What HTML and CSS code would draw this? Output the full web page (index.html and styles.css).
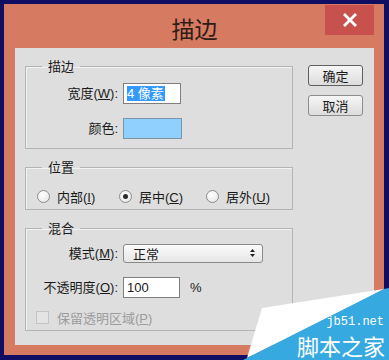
FILE: index.html
```html
<!DOCTYPE html>
<html lang="zh-CN">
<head>
  <meta charset="UTF-8" />
  <title>描边</title>
  <link rel="stylesheet" href="styles.css">
</head>
<body>
  <div class="window">
    <div class="titlebar">
      <span></span>
      <h1 class="titlebar__title">描边</h1>
      <button class="titlebar__close" type="button">
        <svg width="14" height="14" viewBox="0 0 14 14"><path d="M2 2 L12 12 M12 2 L2 12" stroke="#fff" stroke-width="2.8" stroke-linecap="square"/></svg>
      </button>
    </div>

    <div class="content">
      <div class="groups">
        <fieldset class="group group--stroke">
          <legend class="group__legend">描边</legend>
          <div class="row">
            <label class="row__label">宽度(<u>W</u>):</label>
            <span class="field field--width"><span class="field__sel">4 像素</span></span>
          </div>
          <div class="row row--color">
            <label class="row__label">颜色:</label>
            <span class="swatch"></span>
          </div>
        </fieldset>

        <fieldset class="group group--pos">
          <legend class="group__legend">位置</legend>
          <div class="radios">
            <label class="radio radio--inside"><span class="radio__dot"></span><span>内部(<u>I</u>)</span></label>
            <label class="radio radio--center"><span class="radio__dot radio__dot--on"></span><span>居中(<u>C</u>)</span></label>
            <label class="radio"><span class="radio__dot"></span><span>居外(<u>U</u>)</span></label>
          </div>
        </fieldset>

        <fieldset class="group group--blend">
          <legend class="group__legend">混合</legend>
          <div class="row">
            <label class="row__label">模式(<u>M</u>):</label>
            <span class="select"><span>正常</span>
              <svg class="select__arrows" width="7" height="10" viewBox="0 0 7 10"><path d="M3.5 1 L6 4 L1 4 Z M3.5 9 L6 6 L1 6 Z" fill="#222"/></svg>
            </span>
          </div>
          <div class="row row--opacity">
            <label class="row__label">不透明度(<u>O</u>):</label>
            <span class="field field--opacity">100</span>
            <span class="row__unit">%</span>
          </div>
          <div class="check">
            <span class="check__box"></span><span>保留透明区域(<u>P</u>)</span>
          </div>
        </fieldset>
      </div>

      <div class="buttons">
        <button class="btn btn--default" type="button">确定</button>
        <button class="btn" type="button">取消</button>
      </div>
    </div>
  </div>

  <svg class="watermark" width="150" height="75" viewBox="239 285 150 75">
    <polygon points="262,308 384,289 247,358" fill="#ffffff"/>
    <polygon points="384,289 389,288 389,360 243,360 247,358" fill="#36a9e1"/>
    <text x="384" y="325" text-anchor="end" class="watermark__url">jb51.net</text>
    <text x="385" y="355" text-anchor="end" class="watermark__name">脚本之家</text>
  </svg>
</body>
</html>
```

FILE: styles.css
```css
body {
  margin: 0;
  width: 389px;
  height: 360px;
  overflow: hidden;
  position: relative;
  background-color: #100e62;
  font-family: 'Liberation Sans', 'Noto Sans CJK SC', sans-serif;
  font-size: 13px;
  color: #1a1a1a;
}

.window {
  margin: 4px 5px 0 4px;
  height: 351px;
  box-sizing: border-box;
  padding: 0 10px 10px 11px;
  background-color: #d77a62;
}

.titlebar {
  height: 44px;
  display: grid;
  grid-template-columns: 1fr auto 1fr;
}

.titlebar__title {
  margin: 0;
  align-self: center;
  padding-top: 4px;
  font-family: 'Noto Sans CJK SC', sans-serif;
  font-weight: 400;
  font-size: 23px;
  line-height: 30px;
  color: #2e1c16;
}

.titlebar__close {
  justify-self: end;
  width: 49px;
  height: 30px;
  margin-top: 1px;
  padding: 0;
  border: none;
  background-color: #c8504d;
  display: flex;
  align-items: center;
  justify-content: center;
}

.content {
  height: 297px;
  box-sizing: border-box;
  padding: 10px 11px 0 10px;
  background-color: #dedede;
  display: flex;
  gap: 15px;
}

.groups {
  width: 268px;
  display: flex;
  flex-direction: column;
  gap: 10px;
}

.group {
  margin: 0;
  padding: 0;
  min-inline-size: 0;
  border: 1px solid #b4b4b4;
  box-shadow: inset 1px 1px 0 #f2f2f2;
}

.group__legend {
  margin-left: 16px;
  padding: 0 6px;
  line-height: 16px;
  font-family: 'Noto Sans CJK SC', sans-serif;
}

.group--stroke {
  padding: 9px 0 9px 0;
}

.group--pos {
  padding: 13px 0 5px 0;
}

.group--blend {
  padding: 7px 0 6px 0;
}

.row {
  display: flex;
  align-items: center;
  gap: 5px;
  height: 21px;
}

.row--color {
  margin-top: 14px;
}

.row--opacity {
  margin-top: 13px;
}

.row__label {
  width: 92px;
  text-align: right;
  line-height: 16px;
}

.row__unit {
  margin-left: 5px;
}

.field {
  box-sizing: border-box;
  height: 21px;
  border: 1px solid #7f7f7f;
  background-color: #fff;
  display: flex;
  align-items: center;
  padding-left: 3px;
}

.field--width {
  width: 58px;
}

.field--opacity {
  width: 57px;
}

.field__sel {
  background-color: #3399ff;
  color: #fff;
  line-height: 15px;
  padding-right: 1px;
}

.swatch {
  box-sizing: border-box;
  width: 59px;
  height: 21px;
  border: 1px solid #7d95a8;
  background-color: #8fd0ff;
}

.select {
  box-sizing: border-box;
  width: 140px;
  height: 19px;
  margin-top: -1px;
  padding: 0 6px 0 9px;
  border: 1px solid #8a8a8a;
  border-radius: 3px;
  background: linear-gradient(#fbfbfb, #e6e6e6);
  display: flex;
  align-items: center;
  justify-content: space-between;
}

.radios {
  display: flex;
  align-items: center;
  height: 16px;
  padding-left: 11px;
}

.radio {
  display: flex;
  align-items: center;
  gap: 7px;
}

.radio--inside {
  width: 82px;
}

.radio--center {
  width: 87px;
}

.radio__dot {
  box-sizing: border-box;
  width: 13px;
  height: 13px;
  border-radius: 50%;
  border: 1px solid #8c8c8c;
  background: radial-gradient(circle at 40% 35%, #ffffff, #e2e2e2);
  display: flex;
  align-items: center;
  justify-content: center;
}

.radio__dot--on::after {
  content: '';
  width: 5px;
  height: 5px;
  border-radius: 50%;
  background-color: #2a2a2a;
}

.check {
  margin-top: 13px;
  padding-left: 10px;
  height: 13px;
  display: flex;
  align-items: center;
  gap: 8px;
  color: #9c9c9c;
}

.check__box {
  box-sizing: border-box;
  width: 13px;
  height: 13px;
  border: 1px solid #c4c4c4;
  background-color: #e4e4e4;
}

.buttons {
  display: flex;
  flex-direction: column;
  gap: 9px;
  padding-top: 7px;
}

.btn {
  box-sizing: border-box;
  width: 55px;
  height: 21px;
  padding: 0;
  border: 1px solid #8c8c8c;
  border-radius: 3px;
  background: linear-gradient(#f6f6f6, #dcdcdc);
  font-family: 'Noto Sans CJK SC', sans-serif;
  font-size: 13px;
  color: #1a1a1a;
}

.btn--default {
  border-color: #5f5f5f;
}

.watermark {
  position: absolute;
  right: 0;
  bottom: 0;
}

.watermark__url {
  font-family: 'Liberation Mono', monospace;
  font-size: 12px;
  fill: #fff;
}

.watermark__name {
  font-family: 'Noto Sans CJK SC', sans-serif;
  font-size: 22px;
  fill: #fff;
}
```
